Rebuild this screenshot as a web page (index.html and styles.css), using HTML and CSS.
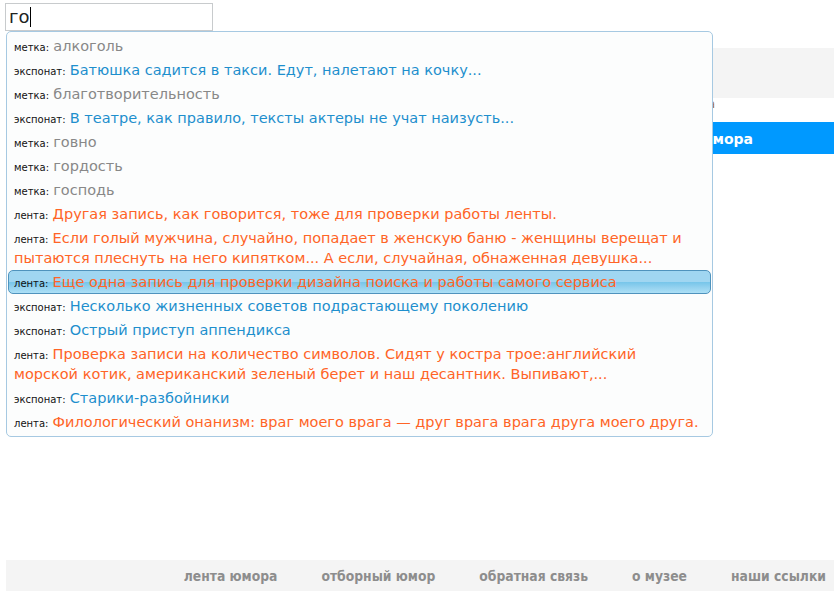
FILE: index.html
```html
<!DOCTYPE html>
<html lang="ru">
<head>
<meta charset="utf-8">
<title>Поиск</title>
<link rel="stylesheet" href="styles.css">
</head>
<body>
<div class="page">
  <div class="search">
    <div class="search-input">го<span class="caret"></span></div>
  </div>
  <div class="banner"></div>
  <div class="tagline"><span>Музей юмора</span></div>
  <div class="navbar"><div class="nav-item">лента юмора</div></div>
  <div class="footer">
    <a class="foot-link">лента юмора</a>
    <a class="foot-link">отборный юмор</a>
    <a class="foot-link">обратная связь</a>
    <a class="foot-link">о музее</a>
    <a class="foot-link">наши ссылки</a>
  </div>

  <ul class="menu">
    <li class="item"><span class="lbl">метка: </span><span class="t tag">алкоголь</span></li>
    <li class="item"><span class="lbl">экспонат: </span><span class="t exp">Батюшка садится в такси. Едут, налетают на кочку...</span></li>
    <li class="item"><span class="lbl">метка: </span><span class="t tag">благотворительность</span></li>
    <li class="item"><span class="lbl">экспонат: </span><span class="t exp">В театре, как правило, тексты актеры не учат наизусть...</span></li>
    <li class="item"><span class="lbl">метка: </span><span class="t tag">говно</span></li>
    <li class="item"><span class="lbl">метка: </span><span class="t tag">гордость</span></li>
    <li class="item"><span class="lbl">метка: </span><span class="t tag">господь</span></li>
    <li class="item"><span class="lbl">лента: </span><span class="t feed">Другая запись, как говорится, тоже для проверки работы ленты.</span></li>
    <li class="item"><span class="lbl">лента: </span><span class="t feed">Если голый мужчина, случайно, попадает в женскую баню - женщины верещат и<br>пытаются плеснуть на него кипятком... А если, случайная, обнаженная девушка...</span></li>
    <li class="item active"><span class="lbl">лента: </span><span class="t feed">Еще одна запись для проверки дизайна поиска и работы самого сервиса</span></li>
    <li class="item"><span class="lbl">экспонат: </span><span class="t exp">Несколько жизненных советов подрастающему поколению</span></li>
    <li class="item"><span class="lbl">экспонат: </span><span class="t exp">Острый приступ аппендикса</span></li>
    <li class="item"><span class="lbl">лента: </span><span class="t feed">Проверка записи на количество символов. Сидят у костра трое:английский<br>морской котик, американский зеленый берет и наш десантник. Выпивают,...</span></li>
    <li class="item"><span class="lbl">экспонат: </span><span class="t exp">Старики-разбойники</span></li>
    <li class="item"><span class="lbl">лента: </span><span class="t feed">Филологический онанизм: враг моего врага — друг врага врага друга моего друга.</span></li>
  </ul>
</div>
</body>
</html>
```

FILE: styles.css
```css
html, body {
  margin: 0;
  padding: 0;
  background: #fff;
}
body {
  font-family: "DejaVu Sans", Verdana, sans-serif;
  width: 834px;
  height: 600px;
  overflow: hidden;
}
.page {
  position: relative;
  height: 600px;
}
.search {
  padding: 3px 0 0 5px;
}
.search-input {
  box-sizing: border-box;
  width: 208px;
  height: 28px;
  border: 1px solid #c8cbcd;
  font-size: 18px;
  line-height: 26px;
  padding-left: 3px;
  color: #222;
  display: flex;
  align-items: center;
}
.caret {
  display: inline-block;
  width: 1px;
  height: 20px;
  background: #000;
  margin-left: 1px;
}
.banner {
  margin: 17px 0 0 6px;
  height: 50px;
  background: #f4f4f4;
}
.tagline {
  width: 715px;
  text-align: right;
  font-size: 12px;
  line-height: 14px;
  margin-top: -1px;
  color: #a0703a;
  height: 25px;
}
.navbar {
  height: 32px;
  margin-left: 6px;
  background: #0099ff;
}
.nav-item {
  width: 747px;
  text-align: right;
  color: #fff;
  font-weight: bold;
  font-size: 14px;
  line-height: 35px;
}
.footer {
  margin: 406px 0 0 6px;
  height: 31px;
  background: #f4f4f4;
  display: flex;
  justify-content: flex-end;
  align-items: center;
  gap: 44px;
  padding-right: 8px;
}
.foot-link {
  font-family: "DejaVu Sans Condensed", "Liberation Sans Narrow", "Open Sans", sans-serif;
  font-weight: bold;
  font-size: 13.75px;
  color: #8d8d8d;
  text-decoration: none;
}
.menu {
  position: absolute;
  left: 6px;
  top: 31px;
  margin: 0;
  padding: 2px 1px;
  list-style: none;
  background: #fcfdfd;
  border: 1px solid #a6c9e2;
  border-radius: 5px;
  width: 703px;
}
.item {
  border: 1px solid transparent;
  border-radius: 5px;
  padding: 1px 5px;
  font-size: 14.5px;
  line-height: 20px;
  white-space: nowrap;
}
.lbl {
  font-size: 10px;
  line-height: 10px;
  margin-right: 1px;
  color: #111;
}
.t {
  font-size: 14.5px;
}
.tag { color: #888; }
.exp { color: #1e8fcd; }
.feed { color: #ff6426; }
.item.active {
  border-color: #4f93bd;
  background: linear-gradient(#a0d6f1 0%, #a0d6f1 48%, #78c6ea 52%, #94d2ef 75%, #ade0f6 100%);
}
```
